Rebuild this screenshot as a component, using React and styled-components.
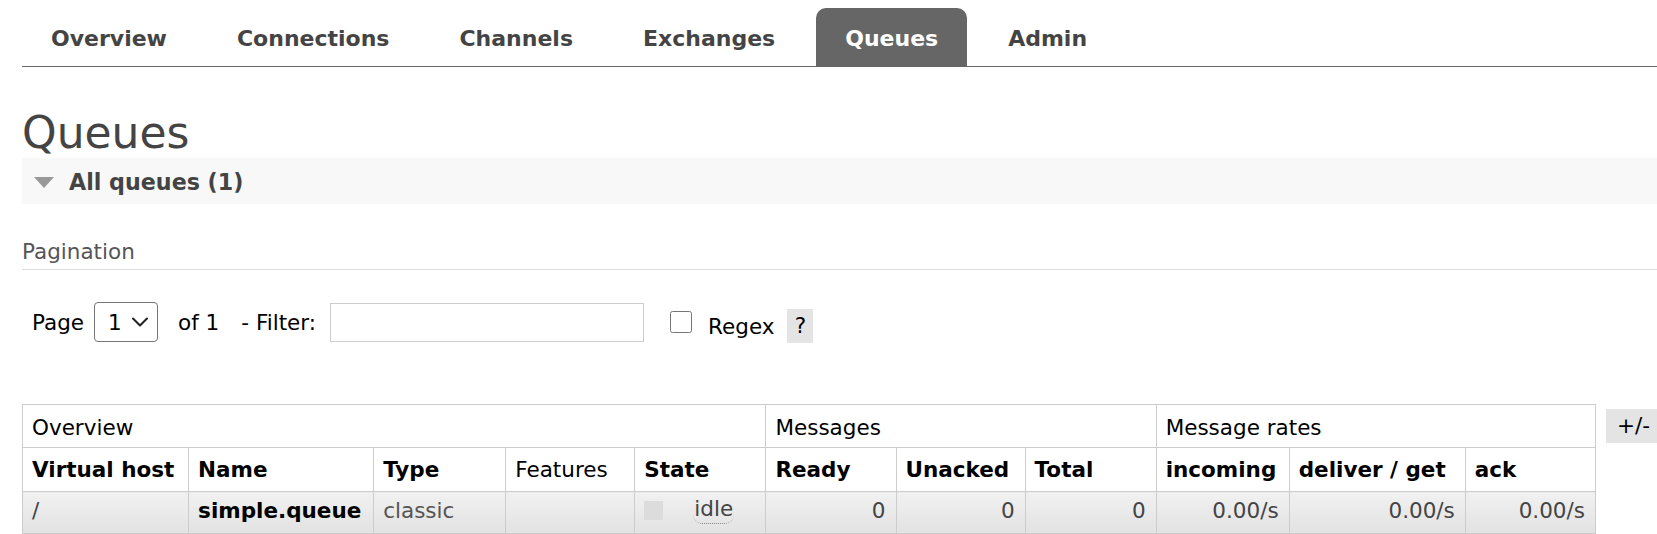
import React from "react";
import styled, { createGlobalStyle } from "styled-components";
import { ChevronDown } from "lucide-react";

const GlobalStyle = createGlobalStyle`
  html, body {
    margin: 0;
    padding: 0;
    background: #fff;
  }
  body {
    font-family: "DejaVu Sans", Verdana, sans-serif;
    font-size: 21.5px;
    color: #000;
    overflow: hidden;
  }
`;

const Page = styled.div`
  padding-left: 22px;
`;

const TabBar = styled.ul`
  display: flex;
  margin: 0;
  padding: 8px 0 0;
  list-style: none;
  border-bottom: 1px solid #666;
`;

const Tab = styled.li`
  height: 54px;
  padding: 4px 29px 0;
  margin-right: 12px;
  line-height: 54px;
  font-size: 22px;
  font-weight: bold;
  color: ${({ $active }) => ($active ? "#fff" : "#444")};
  background: ${({ $active }) => ($active ? "#666" : "transparent")};
  border-radius: 10px 10px 0 0;
  white-space: nowrap;
`;

const Title = styled.h1`
  margin: 40px 0 0;
  font-size: 44px;
  font-weight: normal;
  line-height: 51px;
  color: #444;
`;

const SectionBar = styled.div`
  display: flex;
  align-items: center;
  height: 44px;
  padding: 2px 0 0 12px;
  background: #f8f8f8;
  font-size: 22.2px;
  font-weight: bold;
  color: #444;
`;

const Arrow = styled.span`
  width: 0;
  height: 0;
  border-left: 10px solid transparent;
  border-right: 10px solid transparent;
  border-top: 11px solid #999;
  margin-right: 15px;
`;

const SubHeading = styled.h3`
  margin: 35px 0 0;
  padding-bottom: 4px;
  font-size: 21.5px;
  font-weight: normal;
  line-height: 26px;
  color: #555;
  border-bottom: 1px solid #ddd;
`;

const Controls = styled.div`
  display: flex;
  align-items: center;
  height: 40px;
  margin-top: 32px;
  padding-left: 10px;
`;

const Label = styled.span`
  margin-left: ${({ $ml }) => $ml || 0}px;
  line-height: 25px;
  white-space: nowrap;
`;

const SelectWrap = styled.div`
  position: relative;
  margin-left: 10px;
  width: 64px;
  height: 40px;

  & > svg {
    position: absolute;
    left: 32px;
    top: 6px;
    pointer-events: none;
    color: #222;
  }
`;

const PageSelect = styled.select`
  appearance: none;
  width: 64px;
  height: 40px;
  padding: 0 0 0 13px;
  font-family: inherit;
  font-size: 21.5px;
  color: #000;
  background: #fff;
  border: 1px solid #767676;
  border-radius: 4px;
`;

const FilterInput = styled.input`
  margin-left: 14px;
  width: 314px;
  height: 39px;
  box-sizing: border-box;
  border: 1px solid #ccc;
  font-family: inherit;
  font-size: 21.5px;
`;

const Checkbox = styled.input`
  margin: 0 0 0 26px;
  width: 22px;
  height: 22px;
`;

const RegexGroup = styled.div`
  display: flex;
  align-items: center;
  margin: 8px 0 0 16px;
`;

const Help = styled.span`
  margin-left: 13px;
  width: 26px;
  height: 34px;
  line-height: 34px;
  text-align: center;
  background: #e4e4e4;
`;

const TableRow = styled.div`
  display: flex;
  align-items: flex-start;
  margin-top: 62px;
`;

const List = styled.table`
  flex-shrink: 0;
  width: 1574px;
  table-layout: fixed;
  border-collapse: collapse;
  border: 1px solid #ccc;
`;

const Row = styled.tr`
  height: ${({ $h }) => $h}px;
`;

const Cell = styled.th`
  padding: ${({ $pt }) => $pt || 0}px 10px 0 9px;
  border: 1px solid #ccc;
  text-align: left;
  font-weight: ${({ $bold }) => ($bold ? "bold" : "normal")};
  color: #000;
  white-space: nowrap;
  overflow: hidden;
`;

const DataCell = styled.td`
  padding: 0 10px 5px 9px;
  border: 1px solid #ccc;
  text-align: ${({ $right }) => ($right ? "right" : "left")};
  font-weight: ${({ $bold }) => ($bold ? "bold" : "normal")};
  color: ${({ $bold, $muted }) => ($bold ? "#000" : $muted ? "#555" : "#444")};
  background: linear-gradient(#f1f1f1, #e2e2e2);
  white-space: nowrap;
`;

const StateWrap = styled.div`
  display: flex;
  align-items: center;
`;

const StatusKey = styled.span`
  width: 19px;
  height: 19px;
  background: #dcdcdc;
`;

const StatusText = styled.abbr`
  margin-left: 30px;
  padding: 0 1px 2px;
  text-decoration: none;
  border-bottom: 1px dotted #888;
  border-radius: 0 0 9px 9px;
`;

const Toggle = styled.span`
  flex-shrink: 0;
  margin: 5px 0 0 10px;
  height: 34px;
  padding: 0 12px 0 11px;
  line-height: 34px;
  background: #e4e4e4;
  white-space: nowrap;
`;

const tabs = ["Overview", "Connections", "Channels", "Exchanges", "Queues", "Admin"];
const colWidths = [166, 185, 132, 129, 131, 130, 129, 131, 133, 176, 130];
const columns = [
  "Virtual host", "Name", "Type", "Features", "State",
  "Ready", "Unacked", "Total", "incoming", "deliver / get", "ack",
];

export default function App() {
  return (
    <Page>
      <GlobalStyle />
      <TabBar>
        {tabs.map((t) => (
          <Tab key={t} $active={t === "Queues"}>{t}</Tab>
        ))}
      </TabBar>

      <Title>Queues</Title>
      <SectionBar>
        <Arrow />
        All queues (1)
      </SectionBar>

      <SubHeading>Pagination</SubHeading>
      <Controls>
        <Label>Page</Label>
        <SelectWrap>
          <PageSelect defaultValue="1">
            <option value="1">1</option>
          </PageSelect>
          <ChevronDown size={28} strokeWidth={1.8} />
        </SelectWrap>
        <Label $ml={20}>of 1</Label>
        <Label $ml={22}>- Filter:</Label>
        <FilterInput type="text" />
        <Checkbox type="checkbox" />
        <RegexGroup>
          <Label>Regex</Label>
          <Help>?</Help>
        </RegexGroup>
      </Controls>

      <TableRow>
        <List>
          <colgroup>
            {colWidths.map((w, i) => (
              <col key={i} style={{ width: w }} />
            ))}
          </colgroup>
          <thead>
            <Row $h={43}>
              <Cell colSpan={5} $pt={2}>Overview</Cell>
              <Cell colSpan={3} $pt={2}>Messages</Cell>
              <Cell colSpan={3} $pt={2}>Message rates</Cell>
            </Row>
            <Row $h={44}>
              {columns.map((c) => (
                <Cell key={c} $bold={c !== "Features"}>{c}</Cell>
              ))}
            </Row>
          </thead>
          <tbody>
            <Row $h={42}>
              <DataCell>/</DataCell>
              <DataCell $bold>simple.queue</DataCell>
              <DataCell $muted>classic</DataCell>
              <DataCell />
              <DataCell>
                <StateWrap>
                  <StatusKey />
                  <StatusText>idle</StatusText>
                </StateWrap>
              </DataCell>
              <DataCell $right>0</DataCell>
              <DataCell $right>0</DataCell>
              <DataCell $right>0</DataCell>
              <DataCell $right>0.00/s</DataCell>
              <DataCell $right>0.00/s</DataCell>
              <DataCell $right>0.00/s</DataCell>
            </Row>
          </tbody>
        </List>
        <Toggle>+/-</Toggle>
      </TableRow>
    </Page>
  );
}
